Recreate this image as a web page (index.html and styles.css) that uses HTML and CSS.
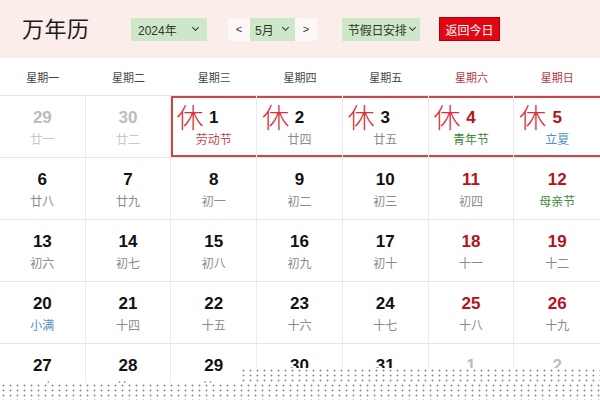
FILE: index.html
```html
<!DOCTYPE html>
<html lang="zh">
<head>
<meta charset="utf-8">
<link rel="stylesheet" href="styles.css">
</head>
<body>
<div class="page">
  <header class="top">
    <h1 class="title">万年历</h1>
    <div class="select year"><span class="val">2024年</span><span class="chev"></span></div>
    <div class="month-nav">
      <span class="nav-btn">&lt;</span>
      <div class="select month"><span class="val">5月</span><span class="chev"></span></div>
      <span class="nav-btn">&gt;</span>
    </div>
    <div class="select holiday"><span class="val">节假日安排</span><span class="chev"></span></div>
    <button class="today">返回今日</button>
  </header>
  <div class="weekdays">
    <div>星期一</div><div>星期二</div><div>星期三</div><div>星期四</div><div>星期五</div><div class="we">星期六</div><div class="we">星期日</div>
  </div>
  <div class="grid">
    <div class="cell other"><b>29</b><span>廿一</span></div>
    <div class="cell other"><b>30</b><span>廿二</span></div>
    <div class="cell rest first"><i>休</i><b>1</b><span class="fest-red">劳动节</span></div>
    <div class="cell rest"><i>休</i><b>2</b><span>廿四</span></div>
    <div class="cell rest"><i>休</i><b>3</b><span>廿五</span></div>
    <div class="cell rest wk"><i>休</i><b>4</b><span class="fest-green">青年节</span></div>
    <div class="cell rest wk"><i>休</i><b>5</b><span class="fest-blue">立夏</span></div>

    <div class="cell"><b>6</b><span>廿八</span></div>
    <div class="cell"><b>7</b><span>廿九</span></div>
    <div class="cell"><b>8</b><span>初一</span></div>
    <div class="cell"><b>9</b><span>初二</span></div>
    <div class="cell"><b>10</b><span>初三</span></div>
    <div class="cell wk"><b>11</b><span>初四</span></div>
    <div class="cell wk"><b>12</b><span class="fest-green">母亲节</span></div>

    <div class="cell"><b>13</b><span>初六</span></div>
    <div class="cell"><b>14</b><span>初七</span></div>
    <div class="cell"><b>15</b><span>初八</span></div>
    <div class="cell"><b>16</b><span>初九</span></div>
    <div class="cell"><b>17</b><span>初十</span></div>
    <div class="cell wk"><b>18</b><span>十一</span></div>
    <div class="cell wk"><b>19</b><span>十二</span></div>

    <div class="cell"><b>20</b><span class="fest-blue">小满</span></div>
    <div class="cell"><b>21</b><span>十四</span></div>
    <div class="cell"><b>22</b><span>十五</span></div>
    <div class="cell"><b>23</b><span>十六</span></div>
    <div class="cell"><b>24</b><span>十七</span></div>
    <div class="cell wk"><b>25</b><span>十八</span></div>
    <div class="cell wk"><b>26</b><span>十九</span></div>

    <div class="cell"><b>27</b><span>二十</span></div>
    <div class="cell"><b>28</b><span>廿一</span></div>
    <div class="cell"><b>29</b><span>廿二</span></div>
    <div class="cell"><b>30</b><span>廿三</span></div>
    <div class="cell"><b>31</b><span>廿四</span></div>
    <div class="cell other"><b>1</b><span>廿五</span></div>
    <div class="cell other"><b>2</b><span>廿六</span></div>
  </div>
  <div class="dots dots-step"></div>
  <div class="dots dots-full"></div>
</div>
</body>
</html>
```

FILE: styles.css
```css
* { box-sizing: border-box; }
html, body { margin: 0; padding: 0; }
body {
  width: 600px;
  height: 400px;
  overflow: hidden;
  background: #fff;
  font-family: "Liberation Sans", Arial, "Noto Sans CJK SC", sans-serif;
  color: #222;
}
.page { position: relative; width: 600px; height: 400px; overflow: hidden; }

.top {
  height: 58px;
  background: #fbeeea;
  display: flex;
  align-items: center;
  padding: 0 0 0 22px;
}
.title {
  margin: 0;
  font-family: "Noto Sans CJK SC", sans-serif;
  font-weight: 400;
  font-size: 22px;
  letter-spacing: 0.5px;
  color: #1a1a1a;
  width: 109px;
  line-height: 1;
  margin-top: -4px;
}
.select {
  height: 23px;
  background: #cde8c8;
  display: flex;
  align-items: center;
  justify-content: space-between;
  font-size: 12px;
  color: #333;
  padding: 0 9px 0 7px;
  white-space: nowrap;
  font-family: "Liberation Sans", "Noto Sans CJK SC", sans-serif;
}
.chev {
  flex: none;
  width: 5px; height: 5px;
  border-right: 1.6px solid #333;
  border-bottom: 1.6px solid #333;
  transform: rotate(45deg);
  margin-top: -3px;
}
.year { width: 76px; margin-right: 21px; }
.month-nav { display: flex; align-items: center; margin-right: 25px; background: #fff; height: 23px; }
.nav-btn { width: 22px; text-align: center; font-size: 11px; color: #333; background: #fdf8f7; height: 23px; line-height: 23px; }
.month { width: 45px; padding-left: 5px; padding-right: 7px; }
.holiday { width: 78px; padding-left: 6px; padding-right: 5px; }
.holiday .val { letter-spacing: -0.3px; }
.today {
  margin-left: 19px;
  width: 61px;
  height: 24px;
  background: #e30613;
  border: 1px solid #a8000a;
  color: #fff;
  font-size: 12px;
  font-family: "Noto Sans CJK SC", sans-serif;
  padding: 0;
}

.weekdays {
  display: grid;
  grid-template-columns: repeat(7, 1fr);
  height: 38px;
  align-items: center;
  font-size: 11px;
  color: #444;
  text-align: center;
  font-family: "Noto Sans CJK SC", sans-serif;
  border-bottom: 1px solid #e6e6e6;
}
.weekdays .we { color: #b3373d; }

.grid {
  display: grid;
  grid-template-columns: repeat(7, 1fr);
  grid-auto-rows: 62px;
}
.cell {
  position: relative;
  border-right: 1px solid #ebebeb;
  border-bottom: 1px solid #e6e6e6;
  display: flex;
  flex-direction: column;
  align-items: center;
  padding-top: 12px;
}
.cell:nth-child(7n) { border-right: none; }
.cell b {
  font-size: 17px;
  line-height: 20px;
  font-weight: 700;
  color: #111;
}
.cell span {
  margin-top: 3px;
  font-size: 12px;
  line-height: 16px;
  color: #8a8a8a;
  font-family: "Noto Sans CJK SC", sans-serif;
}
.cell.wk b { color: #b5121b; }
.cell.other b { color: #bdbdbd; }
.cell.other span { color: #c8c8c8; }
.cell.rest {
  box-shadow: inset 0 2px 0 #c9474e, inset 0 -2px 0 #c9474e;
}
.cell.rest.first {
  box-shadow: inset 0 2px 0 #c9474e, inset 0 -2px 0 #c9474e, inset 2px 0 0 #c9474e;
}
.cell i {
  position: absolute;
  left: 5px;
  top: 4px;
  font-style: normal;
  font-size: 27px;
  line-height: 34px;
  color: #d8303c;
  font-family: "Noto Sans CJK SC", sans-serif;
  font-weight: 300;
}
.fest-red { color: #c44a4e !important; }
.fest-green { color: #3c8a3a !important; }
.fest-blue { color: #4e92c6 !important; }

.dots {
  position: absolute;
  background-color: #fff;
  background-image: radial-gradient(circle, #8f8f8f 0.8px, transparent 1.2px);
  background-size: 7px 5px;
}
.dots-step { left: 240px; top: 368px; right: 0; bottom: 0; }
.dots-full { left: 0; top: 383px; right: 0; bottom: 0; }
```
